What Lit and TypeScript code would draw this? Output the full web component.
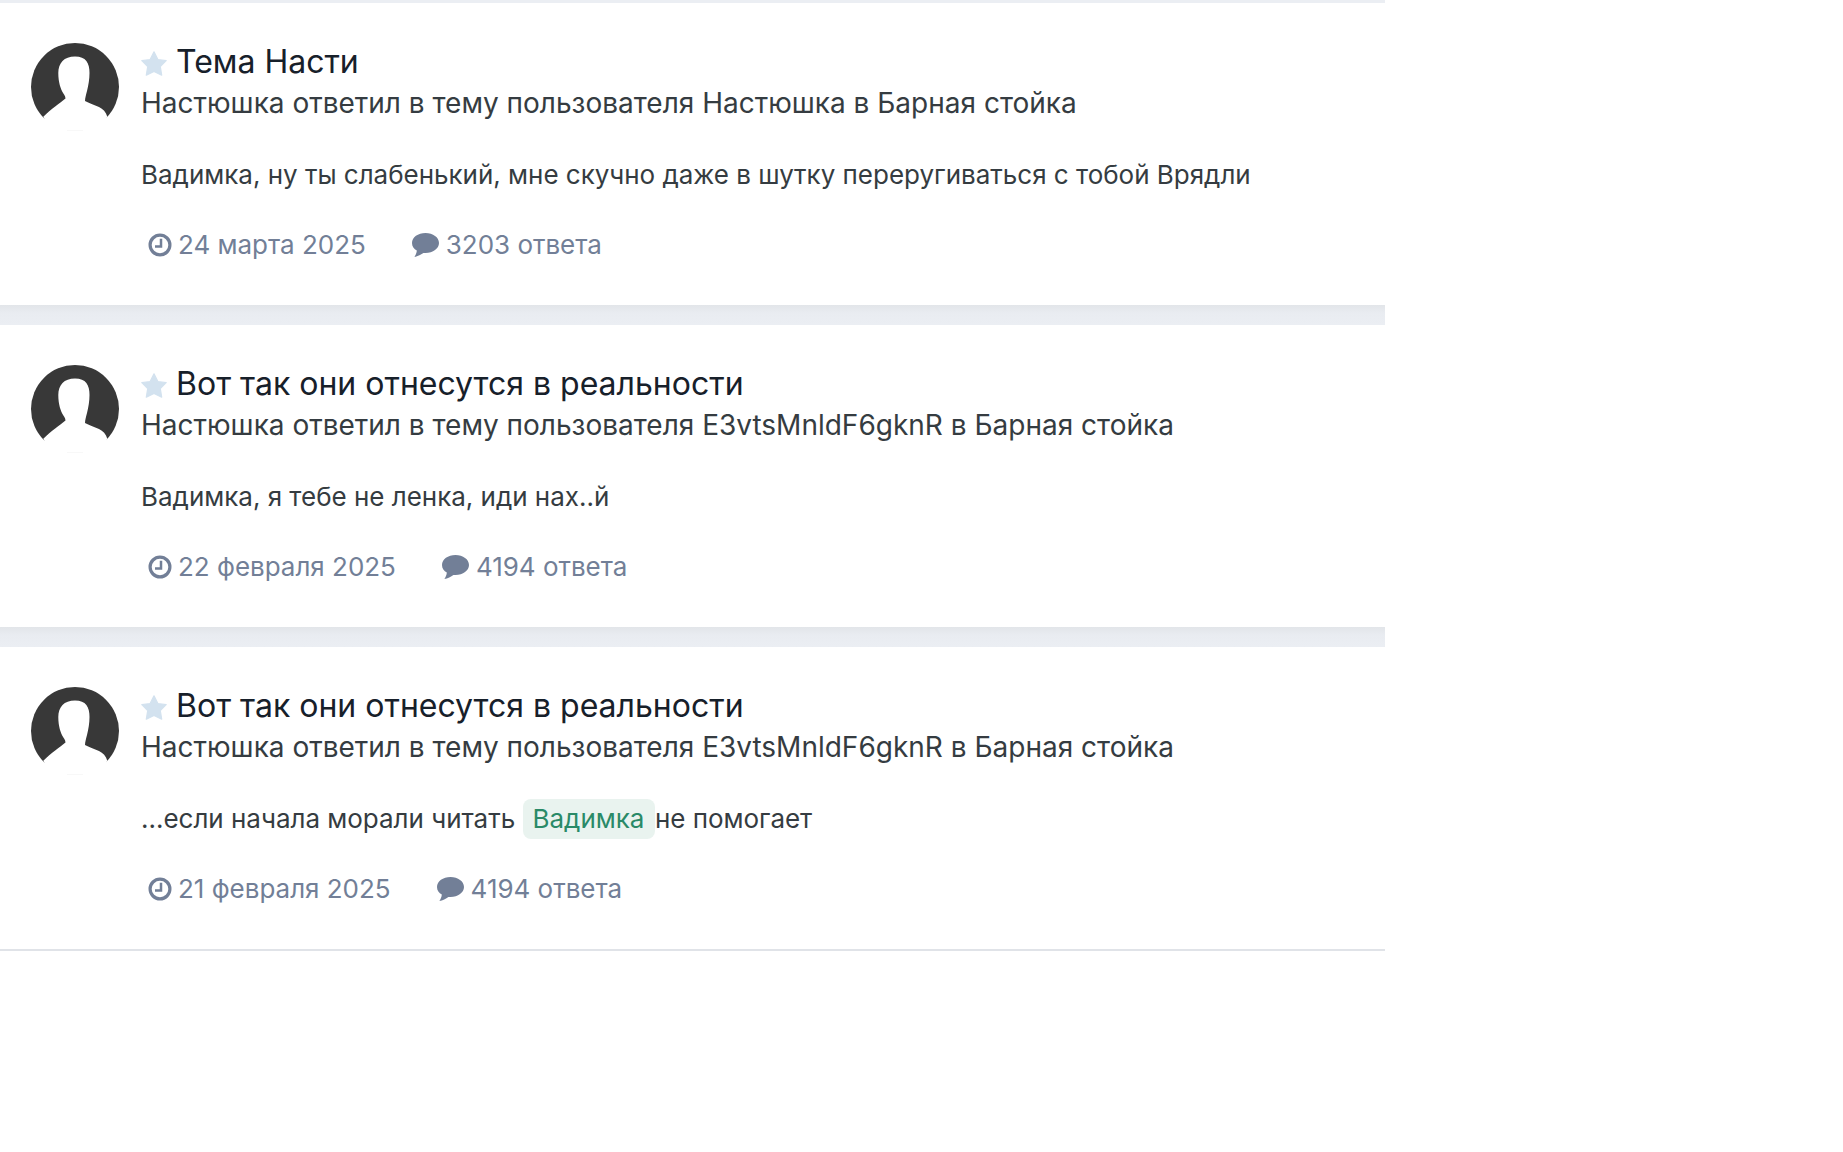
import { LitElement, html, css, svg } from "lit";
import { customElement } from "lit/decorators.js";

interface Row {
  title: string;
  author: string;
  body: unknown;
  date: string;
  replies: string;
}

const avatar = svg`<svg class="avatar" viewBox="0 0 88 88" width="88" height="88">
  <circle cx="44" cy="44" r="44" fill="#383838"/>
  <path fill="#fff" d="M44 13.500C33 13.500 27.300 20 27.300 30C27.300 40 30 46 31.500 49C32.500 51 34.500 53 34.500 55.500C29 60 20 66 12.300 73.700L20 88L68 88L76.300 73.700C75 69 72 66 68 64C63 62 58 60 54 58C54 55 55 52 56 48C57.500 42 58.500 36 58.500 30C58.500 20 55 13.500 44 13.500Z"/>
  <path fill="#f3f3f3" d="M36 87.400h16v.6h-16z"/>
</svg>`;

const star = svg`<svg class="star" viewBox="0 0 26 25" width="26" height="25"><path fill="#d3e2ef" stroke="#d3e2ef" stroke-width="1.200" stroke-linejoin="round" d="M13 .8L16.900 8.500 25.200 9.700 19.300 15.600 20.700 24.200 13 20.400 5.300 24.200 6.700 15.600 .8 9.700 9.100 8.500z"/></svg>`;

const clock = svg`<svg class="clock" viewBox="0 0 24 24" width="24" height="24"><circle cx="12" cy="12" r="9.900" fill="none" stroke="#727f97" stroke-width="3.200"/><path d="M13 5.800v7.800H7" fill="none" stroke="#727f97" stroke-width="2.500"/></svg>`;

const bubble = svg`<svg class="bubble" viewBox="0 0 27 24" width="27" height="24"><path fill="#727f97" d="M13.500 0C6 0 0 4.300 0 10c0 3.400 2 6 4.800 7.500C4.700 19.800 3.700 22 2.400 24c3.200-.6 6.700-2.500 9-4.100.700.100 1.400.100 2.100.100C21 20 27 15.600 27 10S21 0 13.500 0z"/></svg>`;

const rows: Row[] = [
  {
    title: "Тема Насти",
    author: "Настюшка",
    body: html`Вадимка, ну ты слабенький, мне скучно даже в шутку переругиваться с тобой Врядли`,
    date: "24 марта 2025",
    replies: "3203 ответа",
  },
  {
    title: "Вот так они отнесутся в реальности",
    author: "E3vtsMnldF6gknR",
    body: html`Вадимка, я тебе не ленка, иди нах..й`,
    date: "22 февраля 2025",
    replies: "4194 ответа",
  },
  {
    title: "Вот так они отнесутся в реальности",
    author: "E3vtsMnldF6gknR",
    body: html`...если начала морали читать <span class="mention">Вадимка</span>не помогает`,
    date: "21 февраля 2025",
    replies: "4194 ответа",
  },
];

@customElement("app-root")
export class AppRoot extends LitElement {
  static styles = css`
    :host {
      display: block;
      width: 1385px;
      font-family: Inter, "Liberation Sans", sans-serif;
      color: #353c41;
      background: #fff;
      padding-top: 3px;
      box-shadow: inset 0 3px 0 #ebeef3;
    }
    .row {
      display: flex;
      gap: 22px;
      height: 302px;
      box-sizing: border-box;
      padding: 38px 0 0 31px;
      background: #fff;
    }
    .gap {
      height: 20px;
      background: linear-gradient(#e2e5e9, #e9ecf1 40%, #ebeef3);
    }
    .end {
      height: 2px;
      background: #e0e3e8;
    }
    .avatar {
      flex: none;
      display: block;
      margin-top: 2px;
    }
    .main {
      min-width: 0;
    }
    .title {
      display: flex;
      align-items: center;
      gap: 9px;
      margin: 0;
      height: 42px;
      font-size: 32px;
      font-weight: 400;
      line-height: 42px;
      color: #17202a;
    }
    .star {
      flex: none;
      margin-top: 2px;
    }
    .by {
      font-size: 28px;
      line-height: 40px;
    }
    .body {
      margin-top: 32px;
      font-size: 26px;
      line-height: 40px;
      letter-spacing: -0.02px;
    }
    .mention {
      display: inline-block;
      padding: 0 10.5px 0 10px;
      border-radius: 8px;
      background: #e9f3ef;
      color: #2a8a68;
      font-size: 26px;
    }
    .meta {
      display: flex;
      gap: 46px;
      margin-top: 30px;
      padding-left: 7px;
      font-size: 26px;
      line-height: 40px;
      color: #727f97;
      letter-spacing: -0.02px;
    }
    .meta span {
      display: flex;
      align-items: center;
      gap: 6px;
    }
    .meta span + span {
      gap: 7px;
    }
  `;

  render() {
    return html`${rows.map(
      (r, i) => html`
        ${i > 0 ? html`<div class="gap"></div>` : ""}
        <div class="row">
          ${avatar}
          <div class="main">
            <h3 class="title">${star}${r.title}</h3>
            <div class="by">Настюшка ответил в тему пользователя ${r.author} в Барная стойка</div>
            <div class="body">${r.body}</div>
            <div class="meta">
              <span>${clock}${r.date}</span>
              <span>${bubble}${r.replies}</span>
            </div>
          </div>
        </div>
      `
    )}
    <div class="end"></div>`;
  }
}
